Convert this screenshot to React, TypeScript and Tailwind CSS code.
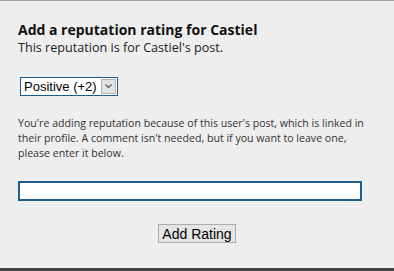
import React from "react";

const App = () => {
  return (
    <div className="w-[394px] h-[271px] bg-[#eeeeee] border-t border-[#a3a3a3] flex flex-col overflow-hidden">
      <div className="grow pl-[18px] pt-[20px]">
        <h1 className="font-['Open_Sans',sans-serif] font-bold text-[14px] leading-[18px] text-[#111]">
          Add a reputation rating for Castiel
        </h1>
        <p className="font-['Open_Sans',sans-serif] text-[12.6px] leading-[18px] text-[#222]">
          This reputation is for Castiel's post.
        </p>

        <div className="mt-[20px] ml-[2px] flex w-[98px] h-[19px] border border-[#1b5a8c] bg-white">
          <span className="grow whitespace-nowrap font-['Liberation_Sans',sans-serif] text-[13px] leading-[17px] pl-[3px] text-black">
            Positive (+2)
          </span>
          <span className="w-[15px] shrink-0 m-[1px] bg-[#e3e3e3] border border-[#b5b5b5] flex items-center justify-center">
            {/* chevron */}
            <svg width="7" height="5" viewBox="0 0 7 5">
              <path d="M0.5 0.5 L3.5 3.5 L6.5 0.5" stroke="#666" strokeWidth="1.5" fill="none" />
            </svg>
          </span>
        </div>

        <p className="mt-[20px] whitespace-nowrap font-['Open_Sans',sans-serif] text-[10.6px] leading-[15px] text-[#333]">
          You're adding reputation because of this user's post, which is linked in
          <br />
          their profile. A comment isn't needed, but if you want to leave one,
          <br />
          please enter it below.
        </p>

        <div className="mt-[20px] w-[344px] h-[20px] border-2 border-[#1b5e8f] bg-white" />

        <div className="mt-[23px] flex justify-center w-[358px]">
          <button className="w-[78px] h-[19px] bg-[#e5e5e5] border border-[#adadad] font-['Liberation_Sans',sans-serif] text-[14px] leading-[16px] text-black">
            Add Rating
          </button>
        </div>
      </div>
      <div className="h-[3px] bg-[#444]" />
    </div>
  );
};

export default App;
